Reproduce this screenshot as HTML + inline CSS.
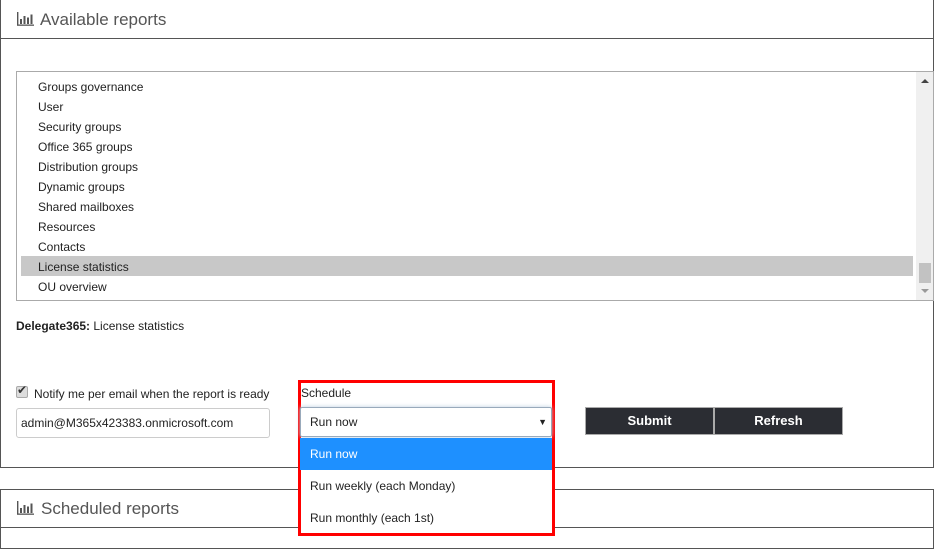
<!DOCTYPE html>
<html><head><style>
*{box-sizing:border-box;margin:0;padding:0}
body{width:934px;height:536px;overflow:hidden;background:#fff;font-family:"Liberation Sans",Arial,sans-serif;font-size:12px;color:#222;position:relative}
.a{position:absolute}
.hdr{font-size:17px;color:#555}
.item{position:absolute;left:22px;height:20px;line-height:20px;padding-left:16px;font-size:12px;color:#222}
.opt{position:absolute;left:300px;width:252px;height:32px;line-height:32px;padding-left:10px;font-size:12px}
</style></head><body>
<div class="a" style="left:0;top:-2px;width:934px;height:470px;border:1px solid #555;border-top:none"></div>
<div class="a" style="left:0;top:38px;width:934px;height:1px;background:#555"></div>
<svg class="a" style="left:17px;top:12px" width="18" height="14" viewBox="0 0 18 14"><rect x="0" y="0" width="1.4" height="13" fill="#555"/><rect x="0" y="12.5" width="17" height="1.3" fill="#555"/><rect x="3" y="7" width="2" height="5" fill="#555"/><rect x="6.5" y="4" width="2" height="8" fill="#555"/><rect x="10" y="5.5" width="2" height="6.5" fill="#555"/><rect x="13.5" y="2.5" width="2" height="9.5" fill="#555"/></svg>
<div class="a hdr" style="left:40px;top:10px">Available reports</div>
<div class="a" style="left:16px;top:71px;width:918px;height:230px;border:1px solid #aaa;overflow:hidden">
<div class="a" style="left:4px;top:184px;width:892px;height:20px;background:#c8c8c8"></div>
<div class="a" style="right:0;top:0;width:17px;height:228px;background:#f0f0f0"></div>
<div class="a" style="right:4px;top:7px;width:0;height:0;border-left:4px solid transparent;border-right:4px solid transparent;border-bottom:4px solid #444"></div>
<div class="a" style="right:2px;top:191px;width:12px;height:20px;background:#c2c2c2"></div>
<div class="a" style="right:4px;top:217px;width:0;height:0;border-left:4px solid transparent;border-right:4px solid transparent;border-top:4px solid #999"></div>
</div>
<div class="item" style="top:77px">Groups governance</div>
<div class="item" style="top:97px">User</div>
<div class="item" style="top:117px">Security groups</div>
<div class="item" style="top:137px">Office 365 groups</div>
<div class="item" style="top:157px">Distribution groups</div>
<div class="item" style="top:177px">Dynamic groups</div>
<div class="item" style="top:197px">Shared mailboxes</div>
<div class="item" style="top:217px">Resources</div>
<div class="item" style="top:237px">Contacts</div>
<div class="item" style="top:257px">License statistics</div>
<div class="item" style="top:277px">OU overview</div>
<div class="a" style="left:16px;top:319px"><b>Delegate365:</b> License statistics</div>
<div class="a" style="left:16px;top:386px;width:12px;height:12px;border:1px solid #aaa;border-radius:2px;background:#ddd"></div>
<div class="a" style="left:17px;top:383px;font-size:12px;color:#333">✔</div>
<div class="a" style="left:34px;top:387px">Notify me per email when the report is ready</div>
<div class="a" style="left:16px;top:408px;width:254px;height:30px;border:1px solid #ccc;border-radius:3px;line-height:28px;padding-left:4px">admin@M365x423383.onmicrosoft.com</div>
<div class="a" style="left:585px;top:407px;width:129px;height:28px;background:#2b2d33;border:1px solid #aaa;color:#fff;font-weight:bold;font-size:13px;text-align:center;line-height:26px">Submit</div>
<div class="a" style="left:714px;top:407px;width:129px;height:28px;background:#2b2d33;border:1px solid #aaa;color:#fff;font-weight:bold;font-size:13px;text-align:center;line-height:26px">Refresh</div>
<div class="a" style="left:0;top:489px;width:934px;height:60px;border:1px solid #555"></div>
<div class="a" style="left:0;top:527px;width:934px;height:1px;background:#555"></div>
<svg class="a" style="left:17px;top:501px" width="18" height="14" viewBox="0 0 18 14"><rect x="0" y="0" width="1.4" height="13" fill="#555"/><rect x="0" y="12.5" width="17" height="1.3" fill="#555"/><rect x="3" y="7" width="2" height="5" fill="#555"/><rect x="6.5" y="4" width="2" height="8" fill="#555"/><rect x="10" y="5.5" width="2" height="6.5" fill="#555"/><rect x="13.5" y="2.5" width="2" height="9.5" fill="#555"/></svg>
<div class="a hdr" style="left:41px;top:499px">Scheduled reports</div>
<div class="a" style="left:298px;top:380px;width:257px;height:156px;background:#fff;border:3px solid #f00"></div>
<div class="a" style="left:301px;top:386px">Schedule</div>
<div class="a" style="left:300px;top:407px;width:252px;height:30px;border:1px solid #9ab;border-radius:2px;line-height:28px;padding-left:9px;box-shadow:0 0 4px #bcd">Run now<span style="position:absolute;right:4px;font-size:9px">▼</span></div>
<div class="opt" style="top:438px;background:#1e90ff;color:#fff">Run now</div>
<div class="opt" style="top:470px">Run weekly (each Monday)</div>
<div class="opt" style="top:502px">Run monthly (each 1st)</div>
</body></html>
